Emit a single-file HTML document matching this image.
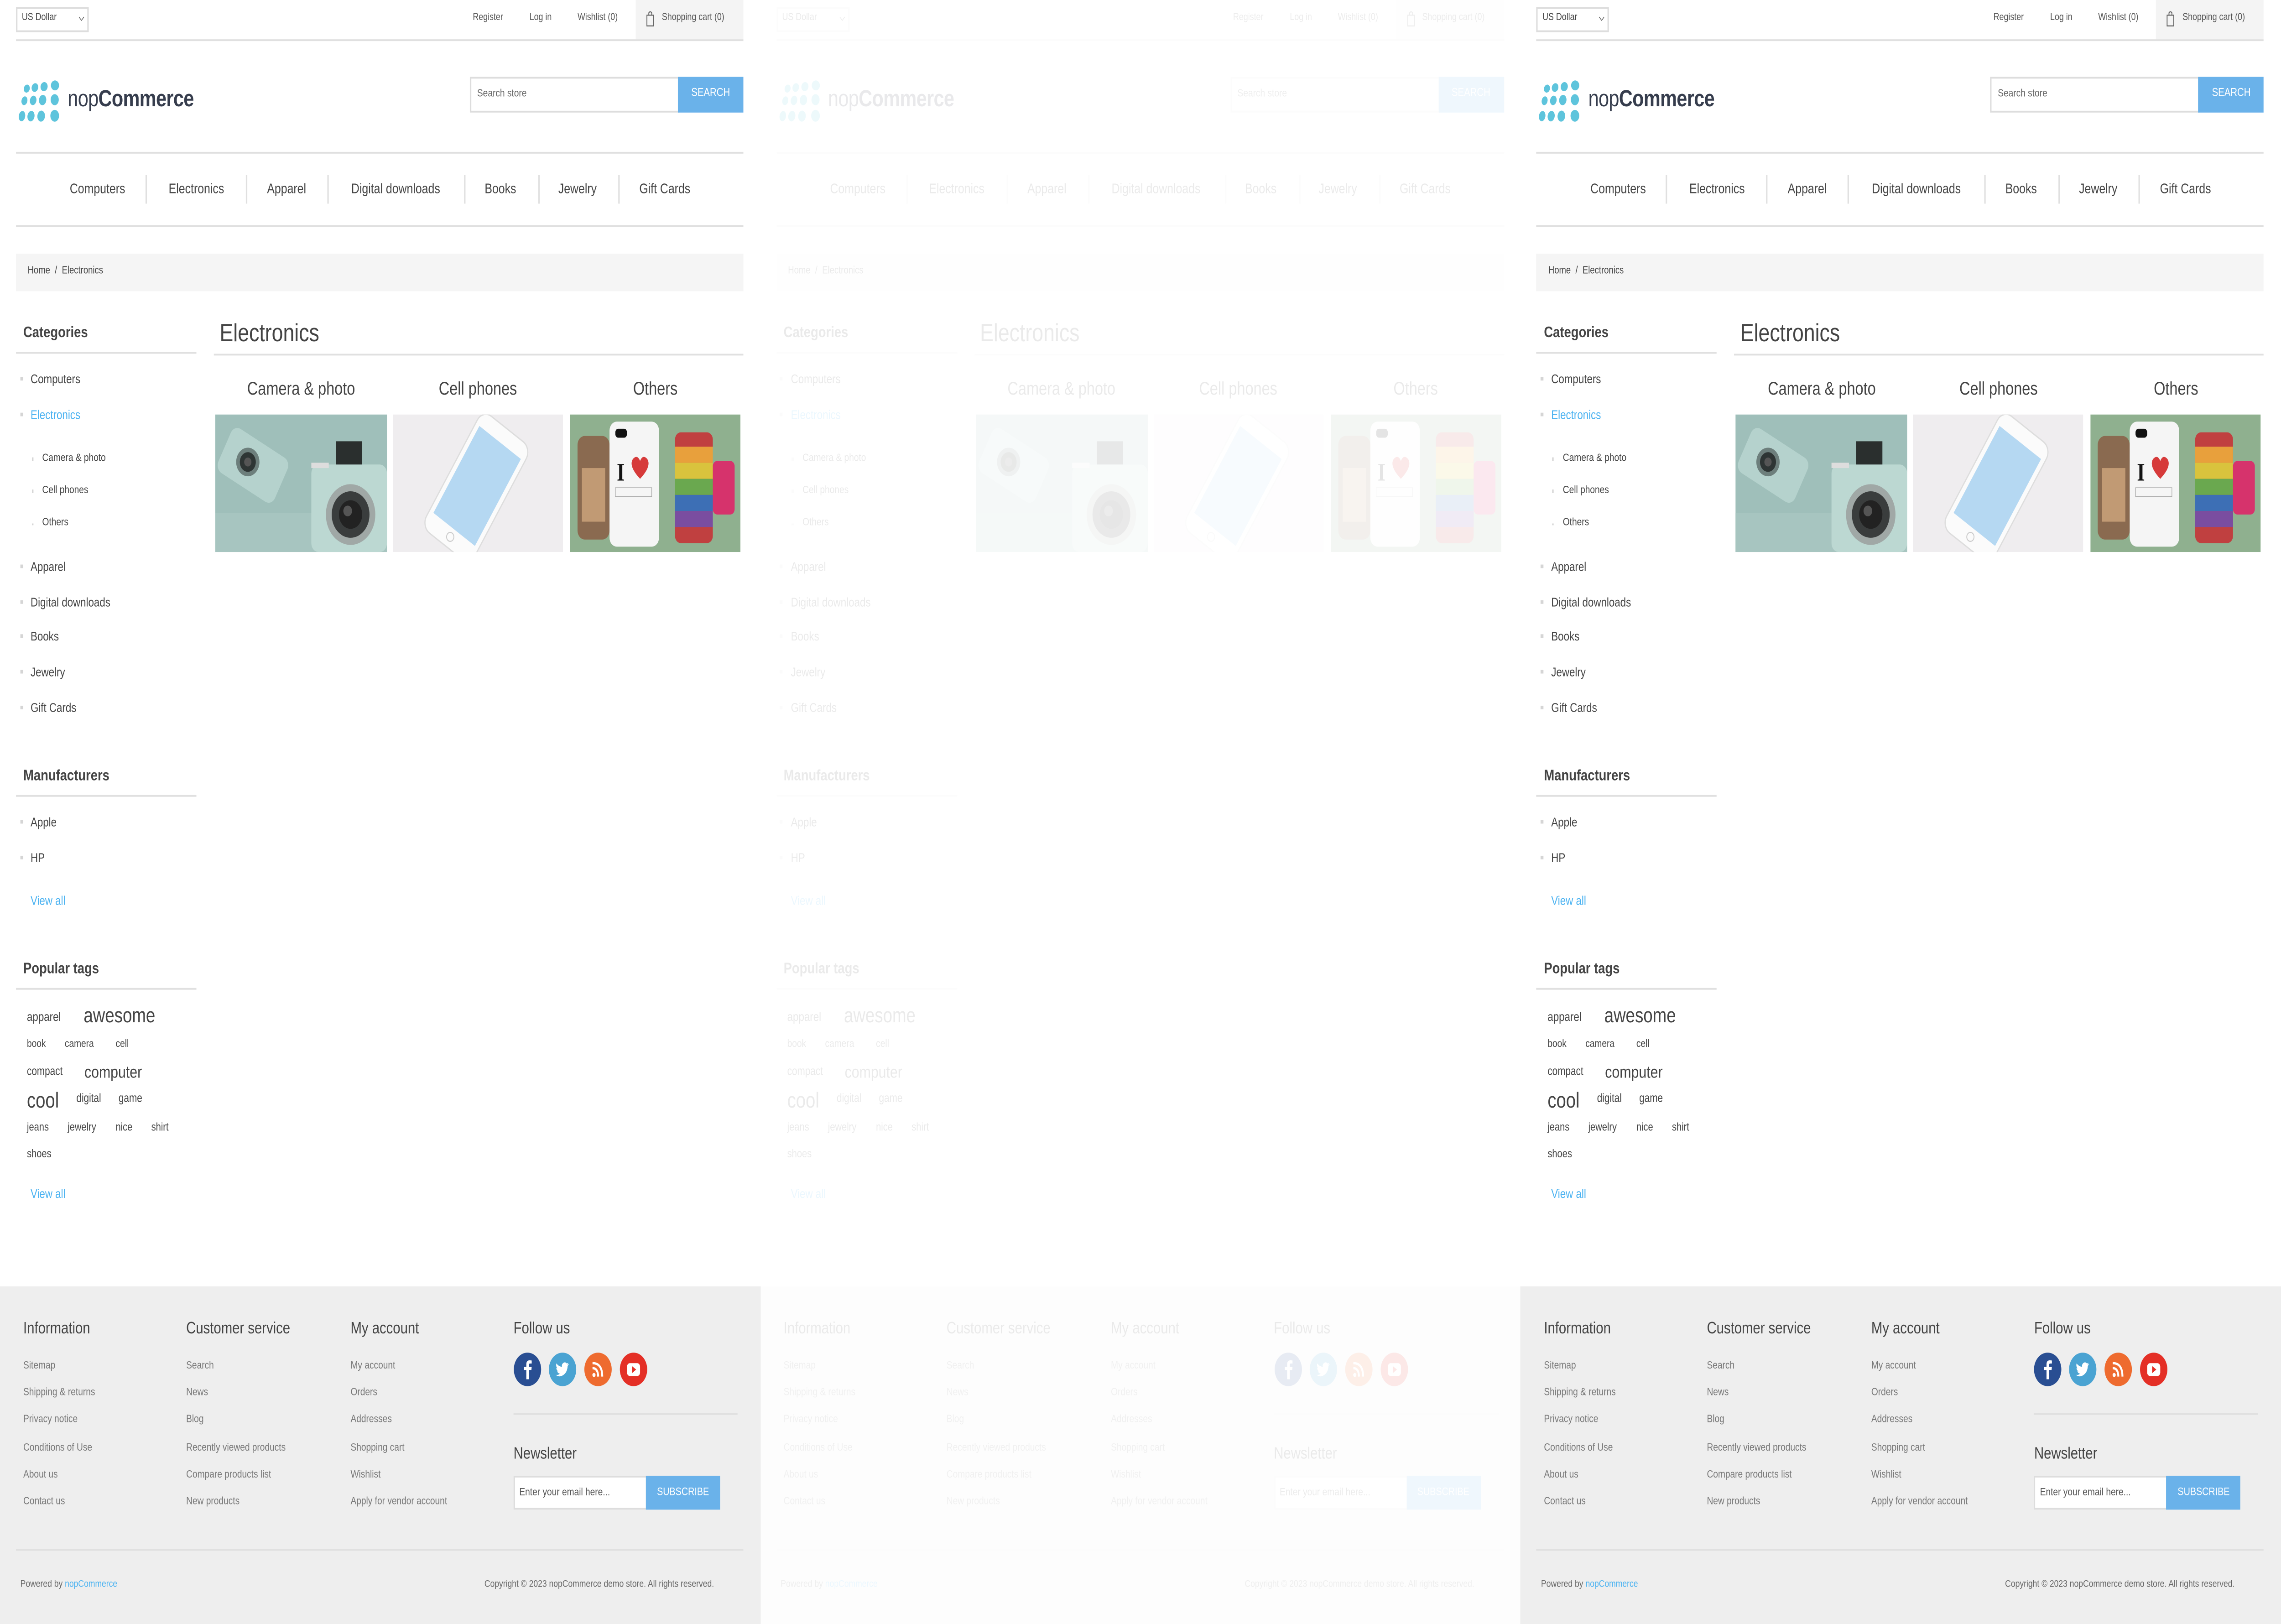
<!DOCTYPE html>
<html><head><meta charset="utf-8">
<style>
*{margin:0;padding:0;box-sizing:border-box}
html,body{width:5000px;height:3560px;overflow:hidden;background:#fff}
#w{position:absolute;left:0;top:0;width:1568px;height:909px;transform:scale(3.18878,3.9164);transform-origin:0 0;font-family:"Liberation Sans",Arial,sans-serif;color:#444}
.p{position:absolute;top:0;width:522.67px;height:909px;overflow:hidden;background:#fff}
.t{position:absolute;white-space:nowrap;line-height:1;transform:translateY(-50%)}
.c{transform:translate(-50%,-50%)}
.l{position:absolute;height:1px;background:#e0e0e0}
.b{position:absolute;width:2px;height:2px;background:#d5d5d5}
.s{font-size:5.8px;color:#444}
.ft{position:absolute;left:0;top:720px;width:522.67px;height:189px;background:#eeeeee}
.fl{font-size:6px;color:#777}
.fh{font-size:9.2px;color:#444}
.blue{color:#4ab2f1}
</style></head><body><div id="w">

<div class="p" style="left:0">
<div style="position:absolute;left:11px;top:4px;width:50px;height:14px;border:1px solid #ddd"></div>
<div class="t s" style="left:15px;top:11px;font-size:5.6px">US Dollar</div>
<svg style="position:absolute;left:54px;top:9px" width="4" height="3" viewBox="0 0 4 3"><path d="M0.3 0.5L2 2.4L3.7 0.5" fill="none" stroke="#555" stroke-width="0.4"/></svg>
<div class="t s" style="left:325px;top:11px;font-size:5.6px;color:#555">Register</div>
<div class="t s" style="left:364px;top:11px;font-size:5.6px;color:#555">Log in</div>
<div class="t s" style="left:397px;top:11px;font-size:5.6px;color:#555">Wishlist (0)</div>
<div style="position:absolute;left:437px;top:0;width:74px;height:22px;background:#f4f4f4"></div>
<svg style="position:absolute;left:444px;top:6px" width="6" height="9" viewBox="0 0 6 9"><rect x="0.7" y="2.5" width="4.6" height="6" fill="none" stroke="#666" stroke-width="0.6"/><path d="M2 2.5V1.2Q3 0 4 1.2V2.5" fill="none" stroke="#666" stroke-width="0.6"/></svg>
<div class="t s" style="left:455px;top:11px;font-size:5.6px;color:#555">Shopping cart (0)</div>
<div class="l" style="left:11px;top:22px;width:500px"></div>
<svg style="position:absolute;left:10px;top:43px" width="34" height="27" viewBox="10 43 34 27">
<g fill="#5ec4dc">
<ellipse cx="18.4" cy="49.6" rx="2" ry="2.3" transform="rotate(30 18.4 49.6)"/><ellipse cx="24" cy="49" rx="2.2" ry="2.5" transform="rotate(30 24 49)"/><ellipse cx="30.3" cy="48.5" rx="2.4" ry="2.6" transform="rotate(30 30.3 48.5)"/><ellipse cx="37.8" cy="47.8" rx="2.8" ry="2.8"/>
<ellipse cx="16.8" cy="56.4" rx="2" ry="2.5" transform="rotate(20 16.8 56.4)"/><ellipse cx="22.8" cy="56.2" rx="2.2" ry="2.7" transform="rotate(20 22.8 56.2)"/><ellipse cx="29.3" cy="56" rx="2.5" ry="2.9" transform="rotate(15 29.3 56)"/><ellipse cx="37.6" cy="55.8" rx="2.8" ry="3.1"/>
<ellipse cx="15.1" cy="65" rx="2.2" ry="2.9" transform="rotate(15 15.1 65)"/><ellipse cx="21.3" cy="65" rx="2.4" ry="3" transform="rotate(15 21.3 65)"/><ellipse cx="28.3" cy="65" rx="2.6" ry="3.1" transform="rotate(10 28.3 65)"/><ellipse cx="37.6" cy="64.8" rx="3" ry="3.3"/>
</g></svg>
<div class="t" style="left:46.5px;top:55px;font-size:13px;color:#363d4d;letter-spacing:-0.2px">nop<b>Commerce</b></div>
<div style="position:absolute;left:323px;top:43px;width:144px;height:20px;border:1px solid #ddd;background:#fff"></div>
<div class="t" style="left:328px;top:53px;font-size:6px;color:#666">Search store</div>
<div style="position:absolute;left:466px;top:43px;width:45px;height:20px;background:#6ab2ea"></div>
<div class="t c" style="left:488.5px;top:53px;font-size:6.4px;color:#fff">SEARCH</div>
<div class="l" style="left:11px;top:85px;width:500px"></div>
<div class="t c" style="left:67px;top:105.5px;font-size:7.8px">Computers</div>
<div class="t c" style="left:135px;top:105.5px;font-size:7.8px">Electronics</div>
<div class="t c" style="left:197px;top:105.5px;font-size:7.8px">Apparel</div>
<div class="t c" style="left:272px;top:105.5px;font-size:7.8px">Digital downloads</div>
<div class="t c" style="left:344px;top:105.5px;font-size:7.8px">Books</div>
<div class="t c" style="left:397px;top:105.5px;font-size:7.8px">Jewelry</div>
<div class="t c" style="left:457px;top:105.5px;font-size:7.8px">Gift Cards</div>
<div class="l" style="left:100px;top:98px;width:0.5px;height:16px"></div>
<div class="l" style="left:169px;top:98px;width:0.5px;height:16px"></div>
<div class="l" style="left:225px;top:98px;width:0.5px;height:16px"></div>
<div class="l" style="left:319px;top:98px;width:0.5px;height:16px"></div>
<div class="l" style="left:370px;top:98px;width:0.5px;height:16px"></div>
<div class="l" style="left:425px;top:98px;width:0.5px;height:16px"></div>
<div class="l" style="left:11px;top:126px;width:500px"></div>
<div style="position:absolute;left:11px;top:142px;width:500px;height:21px;background:#f5f5f5"></div>
<div class="t s" style="left:19px;top:152.5px;font-size:5.8px">Home&nbsp; / &nbsp;Electronics</div>
<div class="t" style="left:16px;top:185.5px;font-size:8.6px;font-weight:bold">Categories</div>
<div class="l" style="left:11px;top:197px;width:124px"></div>
<div class="b" style="left:13.5px;top:211px"></div><div class="t" style="left:21px;top:212.5px;font-size:7px">Computers</div>
<div class="b" style="left:13.5px;top:231px"></div><div class="t blue" style="left:21px;top:232.5px;font-size:7px">Electronics</div>
<div class="b" style="left:21.5px;top:256px;width:1.5px;height:1.5px"></div><div class="t" style="left:29px;top:256.5px;font-size:6px">Camera &amp; photo</div>
<div class="b" style="left:21.5px;top:274px;width:1.5px;height:1.5px"></div><div class="t" style="left:29px;top:274.5px;font-size:6px">Cell phones</div>
<div class="b" style="left:21.5px;top:292.5px;width:1.5px;height:1.5px"></div><div class="t" style="left:29px;top:293px;font-size:6px">Others</div>
<div class="b" style="left:13.5px;top:316px"></div><div class="t" style="left:21px;top:317.5px;font-size:7px">Apparel</div>
<div class="b" style="left:13.5px;top:336px"></div><div class="t" style="left:21px;top:337.5px;font-size:7px">Digital downloads</div>
<div class="b" style="left:13.5px;top:355px"></div><div class="t" style="left:21px;top:356.5px;font-size:7px">Books</div>
<div class="b" style="left:13.5px;top:375px"></div><div class="t" style="left:21px;top:376.5px;font-size:7px">Jewelry</div>
<div class="b" style="left:13.5px;top:395px"></div><div class="t" style="left:21px;top:396.5px;font-size:7px">Gift Cards</div>
<div class="t" style="left:16px;top:433.5px;font-size:8.6px;font-weight:bold">Manufacturers</div>
<div class="l" style="left:11px;top:445px;width:124px"></div>
<div class="b" style="left:13.5px;top:459px"></div><div class="t" style="left:21px;top:460.5px;font-size:7px">Apple</div>
<div class="b" style="left:13.5px;top:479px"></div><div class="t" style="left:21px;top:480.5px;font-size:7px">HP</div>
<div class="t blue" style="left:21px;top:505px;font-size:7px">View all</div>
<div class="t" style="left:16px;top:542px;font-size:8.6px;font-weight:bold">Popular tags</div>
<div class="l" style="left:11px;top:553px;width:124px"></div>
<div class="t" style="left:18.5px;top:570px;font-size:7px">apparel</div>
<div class="t" style="left:57.5px;top:570px;font-size:11.5px">awesome</div>
<div class="t" style="left:18.5px;top:585px;font-size:6px">book</div>
<div class="t" style="left:44.5px;top:585px;font-size:6px">camera</div>
<div class="t" style="left:79.5px;top:585px;font-size:6px">cell</div>
<div class="t" style="left:18.5px;top:600.5px;font-size:6.5px">compact</div>
<div class="t" style="left:58px;top:600.5px;font-size:9.5px">computer</div>
<div class="t" style="left:18.5px;top:616px;font-size:12px">cool</div>
<div class="t" style="left:52.5px;top:616px;font-size:6.5px">digital</div>
<div class="t" style="left:81.5px;top:616px;font-size:6.5px">game</div>
<div class="t" style="left:18.5px;top:631.5px;font-size:6.3px">jeans</div>
<div class="t" style="left:46.5px;top:631.5px;font-size:6.3px">jewelry</div>
<div class="t" style="left:79.5px;top:631.5px;font-size:6.3px">nice</div>
<div class="t" style="left:104px;top:631.5px;font-size:6.3px">shirt</div>
<div class="t" style="left:18.5px;top:646.5px;font-size:6.3px">shoes</div>
<div class="t blue" style="left:21px;top:669px;font-size:7px">View all</div>
<div class="t" style="left:151px;top:185.5px;font-size:14px">Electronics</div>
<div class="l" style="left:147px;top:198px;width:364px"></div>
<div class="t c" style="left:207px;top:218.5px;font-size:10.2px">Camera &amp; photo</div>
<div class="t c" style="left:328.5px;top:218.5px;font-size:10.2px">Cell phones</div>
<div class="t c" style="left:450.5px;top:218.5px;font-size:10.2px">Others</div>
<svg style="position:absolute;left:148px;top:232px" width="118" height="77" viewBox="0 0 118 77">
<rect width="118" height="77" fill="#9fbfba"/>
<rect x="0" y="55" width="118" height="22" fill="#a7c5c0"/>
<g transform="rotate(28 25 28)"><rect x="4" y="14" width="44" height="28" rx="5" fill="#b5d2cd"/><circle cx="22" cy="28" r="8" fill="#6d7f7c"/><circle cx="22" cy="28" r="5.5" fill="#2e3534"/><circle cx="22" cy="28" r="2.5" fill="#555"/></g>
<rect x="66" y="28" width="52" height="49" rx="5" fill="#bcd8d2"/>
<rect x="66" y="27" width="12" height="3" fill="#ddd"/>
<rect x="83" y="15" width="18" height="13" fill="#2a2f2e"/>
<circle cx="93" cy="56" r="17" fill="#a0a8a6"/><circle cx="93" cy="56" r="13" fill="#3a3d3d"/><circle cx="93" cy="56" r="8" fill="#222"/><circle cx="91" cy="54" r="3" fill="#555"/>
</svg>
<svg style="position:absolute;left:270px;top:232px" width="117" height="77" viewBox="0 0 117 77">
<rect width="117" height="77" fill="#efedef"/>
<g transform="rotate(33 58 40)"><rect x="38" y="2" width="40" height="78" rx="7" fill="#fbfbfb" stroke="#ddd" stroke-width="0.8"/><rect x="41" y="11" width="34" height="58" fill="#b5d8f2"/><circle cx="58" cy="74" r="2.5" fill="none" stroke="#ccc" stroke-width="0.6"/></g>
</svg>
<svg style="position:absolute;left:392px;top:232px" width="117" height="77" viewBox="0 0 117 77">
<rect width="117" height="77" fill="#8fb08f"/>
<rect x="5" y="12" width="22" height="58" rx="5" fill="#8a6a50"/>
<rect x="8" y="30" width="16" height="30" fill="#c19a74"/>
<rect x="72" y="10" width="26" height="62" rx="4" fill="#c04040"/>
<rect x="72" y="18" width="26" height="9" fill="#e8a03c"/><rect x="72" y="27" width="26" height="9" fill="#d9c33d"/><rect x="72" y="36" width="26" height="9" fill="#6aa84f"/><rect x="72" y="45" width="26" height="9" fill="#3d6fb5"/><rect x="72" y="54" width="26" height="9" fill="#7a4da0"/>
<rect x="98" y="26" width="15" height="30" rx="3" fill="#d6336c"/>
<rect x="27" y="4" width="34" height="70" rx="5" fill="#f5f5f5"/>
<rect x="31" y="8" width="8" height="5" rx="2" fill="#111"/>
<text x="32" y="37" font-family="Liberation Serif,serif" font-weight="bold" font-size="14" fill="#111">I</text>
<path d="M48 36 Q40 29 43 25 Q46 22 48 26 Q50 22 53 25 Q56 29 48 36Z" fill="#d63a3a"/>
<rect x="31" y="41" width="25" height="5" fill="none" stroke="#aaa" stroke-width="0.4"/>
</svg>
<div class="ft"></div>
<div class="t fh" style="left:16px;top:743.5px">Information</div>
<div class="t fh" style="left:128px;top:743.5px">Customer service</div>
<div class="t fh" style="left:241px;top:743.5px">My account</div>
<div class="t fh" style="left:353px;top:743.5px">Follow us</div>
<div class="t fl" style="left:16px;top:764.5px">Sitemap</div>
<div class="t fl" style="left:16px;top:780px">Shipping &amp; returns</div>
<div class="t fl" style="left:16px;top:795px">Privacy notice</div>
<div class="t fl" style="left:16px;top:810.5px">Conditions of Use</div>
<div class="t fl" style="left:16px;top:826px">About us</div>
<div class="t fl" style="left:16px;top:841px">Contact us</div>
<div class="t fl" style="left:128px;top:764.5px">Search</div>
<div class="t fl" style="left:128px;top:780px">News</div>
<div class="t fl" style="left:128px;top:795px">Blog</div>
<div class="t fl" style="left:128px;top:810.5px">Recently viewed products</div>
<div class="t fl" style="left:128px;top:826px">Compare products list</div>
<div class="t fl" style="left:128px;top:841px">New products</div>
<div class="t fl" style="left:241px;top:764.5px">My account</div>
<div class="t fl" style="left:241px;top:780px">Orders</div>
<div class="t fl" style="left:241px;top:795px">Addresses</div>
<div class="t fl" style="left:241px;top:810.5px">Shopping cart</div>
<div class="t fl" style="left:241px;top:826px">Wishlist</div>
<div class="t fl" style="left:241px;top:841px">Apply for vendor account</div>
<svg style="position:absolute;left:353px;top:756px" width="94" height="21" viewBox="0 0 94 21">
<circle cx="9.6" cy="10.5" r="9.4" fill="#294e92"/><path d="M10.6 16V10.8H12.3L12.5 9H10.6V7.9Q10.6 7.2 11.4 7.2H12.5V5.5Q11.8 5.4 11 5.4Q8.8 5.4 8.8 7.7V9H7.2V10.8H8.8V16Z" fill="#fff"/>
<circle cx="33.7" cy="10.5" r="9.4" fill="#4aa3d2"/><path d="M29 13.5Q31 15 33.5 14Q37 12.5 37.2 8.5L38.2 7.6L37 7.8L37.8 6.8L36.6 7.2Q35.4 6 34 7Q33 7.8 33.3 9Q31 8.9 29.5 7.1Q28.9 8.7 30.1 9.9L29.4 9.7Q29.5 11 30.8 11.6H30Q30.5 12.7 31.9 12.9Q30.6 13.8 29 13.5Z" fill="#fff"/>
<circle cx="58.1" cy="10.5" r="9.4" fill="#ee6b2f"/><circle cx="55.3" cy="13.6" r="1.1" fill="#fff"/><path d="M54.3 9.8Q58 9.7 58.2 14.5M54.3 7Q61 7 61 14.5" fill="none" stroke="#fff" stroke-width="1.3"/>
<circle cx="82.5" cy="10.5" r="9.4" fill="#e42f26"/><rect x="78" y="7" width="9" height="7.2" rx="2" fill="#fff"/><path d="M81.4 8.6V12.6L84.3 10.6Z" fill="#e42f26"/>
</svg>
<div class="l" style="left:353px;top:791px;width:154px"></div>
<div class="t fh" style="left:353px;top:813.5px">Newsletter</div>
<div style="position:absolute;left:353px;top:826px;width:92px;height:19px;background:#fff;border:0.5px solid #ddd"></div>
<div class="t fl" style="left:357px;top:835.5px;color:#555">Enter your email here...</div>
<div style="position:absolute;left:444px;top:826px;width:51px;height:19px;background:#6ab2ea"></div>
<div class="t c" style="left:469.5px;top:835.5px;font-size:6.2px;color:#fff">SUBSCRIBE</div>
<div class="l" style="left:11px;top:867px;width:500px"></div>
<div class="t" style="left:14px;top:888px;font-size:5.5px;color:#666">Powered by <span class="blue">nopCommerce</span></div>
<div class="t" style="left:333px;top:888px;font-size:5.5px;color:#666">Copyright © 2023 nopCommerce demo store. All rights reserved.</div>
</div>

</div>
<script>
var w=document.getElementById('w'),p=w.querySelector('.p');
var a=p.cloneNode(true);a.style.left='522.67px';a.style.opacity='0.11';w.appendChild(a);
var b=p.cloneNode(true);b.style.left='1045.33px';w.appendChild(b);
</script>
</body></html>
